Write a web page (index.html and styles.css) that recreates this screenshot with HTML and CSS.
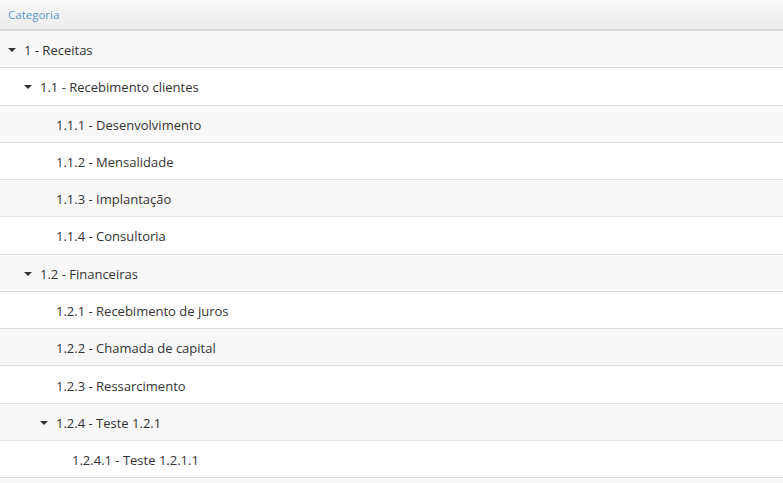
FILE: index.html
```html
<!DOCTYPE html>
<html>
<head>
<meta charset="utf-8">
<link rel="stylesheet" href="styles.css">
</head>
<body>
<div class="grid">
  <div class="header"><span class="htext">Categoria</span></div>
  <div class="row alt l0"><span class="tog"></span><span class="label">1 - Receitas</span></div>
  <div class="row l1"><span class="tog"></span><span class="label">1.1 - Recebimento clientes</span></div>
  <div class="row alt l2"><span class="sp"></span><span class="label">1.1.1 - Desenvolvimento</span></div>
  <div class="row l2"><span class="sp"></span><span class="label">1.1.2 - Mensalidade</span></div>
  <div class="row alt l2"><span class="sp"></span><span class="label">1.1.3 - Implantação</span></div>
  <div class="row l2"><span class="sp"></span><span class="label">1.1.4 - Consultoria</span></div>
  <div class="row alt l1"><span class="tog"></span><span class="label">1.2 - Financeiras</span></div>
  <div class="row l2"><span class="sp"></span><span class="label">1.2.1 - Recebimento de juros</span></div>
  <div class="row alt l2"><span class="sp"></span><span class="label">1.2.2 - Chamada de capital</span></div>
  <div class="row l2"><span class="sp"></span><span class="label">1.2.3 - Ressarcimento</span></div>
  <div class="row alt l2"><span class="tog"></span><span class="label">1.2.4 - Teste 1.2.1</span></div>
  <div class="row l3"><span class="sp"></span><span class="label">1.2.4.1 - Teste 1.2.1.1</span></div>
  <div class="row alt"></div>
</div>
</body>
</html>
```
FILE: styles.css
```css
html, body {
  margin: 0;
  padding: 0;
  background: #ffffff;
  overflow: hidden;
}
body {
  font-family: "Open Sans", "Liberation Sans", sans-serif;
  font-size: 13px;
  color: #333333;
}
.grid {
  display: flex;
  flex-direction: column;
  width: 783px;
}
.header {
  height: 29px;
  border-bottom: 2px solid #d8d8d8;
  background: linear-gradient(#f7f7f7, #ececec);
  display: flex;
  align-items: center;
  padding-left: 8px;
}
.htext {
  font-size: 11.5px;
  color: #5d97cf;
}
.row {
  height: 36.27px;
  border-bottom: 1px solid #dedede;
  background: #ffffff;
  display: flex;
  align-items: center;
  padding-left: 8px;
  flex-shrink: 0;
}
.row.alt {
  background: #f8f8f8;
}
.l1 { padding-left: 24px; }
.l2 { padding-left: 40px; }
.l3 { padding-left: 56px; }
.tog, .sp {
  width: 16px;
  height: 16px;
  flex-shrink: 0;
  display: flex;
  align-items: center;
}
.tog::before {
  content: "";
  width: 0;
  height: 0;
  border-left: 4px solid transparent;
  border-right: 4px solid transparent;
  border-top: 4px solid #333333;
  position: relative;
  top: 1px;
}
.label {
  white-space: nowrap;
  color: #333333;
  padding-top: 2px;
}
```
